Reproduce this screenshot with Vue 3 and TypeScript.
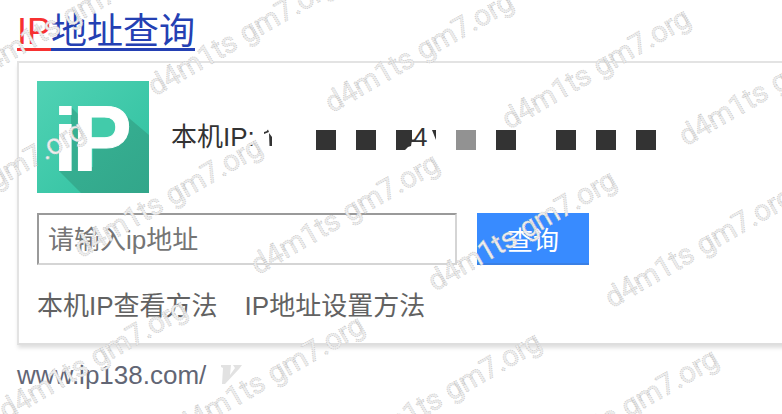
<script setup lang="ts">
interface Point { x: number; y: number }

const squares = [
  { x: 316, fill: '#333' }, { x: 356, fill: '#333' },
  { x: 456, fill: '#929292' }, { x: 496, fill: '#333' },
  { x: 556, fill: '#333' }, { x: 596, fill: '#333' }, { x: 636, fill: '#333' },
]

const rows: Point[] = [{ x: -22, y: 80 }, { x: -96, y: 242 }, { x: 6, y: 420.5 }]
const marks: Point[] = rows.flatMap((row) =>
  [0, 1, 2, 3, 4, 5].map((i) => ({ x: row.x + i * 177, y: row.y + i * 16.6 })),
)
</script>

<template>
  <main class="result">
    <h3 class="title"><a class="title-link"><em>IP</em>地址查询</a></h3>
    <section class="card">
      <div class="info">
        <svg class="logo" viewBox="0 0 112 112">
          <defs>
            <linearGradient id="tile" x1="0" y1="0" x2="1" y2="1">
              <stop offset="0" stop-color="#50d2b4" />
              <stop offset="1" stop-color="#2fc09f" />
            </linearGradient>
            <linearGradient id="shade" x1="0" y1="0" x2="1" y2="1">
              <stop offset="0.2" stop-color="#37b193" />
              <stop offset="1" stop-color="#32a68a" />
            </linearGradient>
          </defs>
          <rect width="112" height="112" fill="url(#tile)" />
          <path d="M34 26 L42 34 V90 H34 Z M56 60 L86 32 L112 54 V112 H44 L22 90 L56 86 Z" fill="url(#shade)" />
          <path d="M50 32 H72 Q84 34 84 46 Q84 60 72 60 H50 Z" fill="#42cbaa" />
          <g class="logo-letters">
            <text transform="translate(15.8 90) scale(1 .97)" font-size="91">i</text>
            <text transform="translate(35.6 89.6) scale(.955 .99)" font-size="93" class="logo-cap">P</text>
          </g>
        </svg>
        <span class="label">本机IP:</span>
        <svg class="redacted" viewBox="262 117 400 40">
          <path d="M264 132 Q267 131.5 268 129.5 L269 132 L264 134 Z M269 133 L272 137 V146 H269.5 Z" fill="#333" />
          <rect v-for="s in squares" :key="s.x" :x="s.x" y="130" width="20" height="20" :fill="s.fill" />
          <path d="M396 130 H412 V140 L411 146 L408 147 L405 150 H396 Z" fill="#333" />
          <rect x="410" y="139.5" width="5" height="2.5" fill="#333" />
          <text x="413" y="146" class="digit">4</text>
          <path d="M432 130 H436 V140 Z" fill="#333" />
        </svg>
      </div>
      <form class="search" @submit.prevent>
        <input class="field" type="text" placeholder="请输入ip地址" />
        <button class="submit" type="submit">查询</button>
      </form>
      <nav class="links"><a>本机IP查看方法</a><a>IP地址设置方法</a></nav>
    </section>
    <footer class="source">
      <span>www.ip138.com/</span>
      <svg class="badge" viewBox="0 0 22 20"><path d="M0 0 H10 L9 10 L14 3 L12 0 H21 L18 4 L4 19 H1 L2 3 L0 2 Z" fill="#e2e2e2" /></svg>
    </footer>
    <svg class="watermark" viewBox="0 0 782 414">
      <text v-for="(m, i) in marks" :key="i" :transform="`translate(${m.x} ${m.y}) rotate(-30)`" textLength="212">d4m1ts gm7.org</text>
    </svg>
  </main>
</template>

<style>
body { margin: 0; background: #fff; overflow: hidden; }
</style>

<style scoped>
.result {
  position: relative;
  box-sizing: border-box;
  width: 782px;
  height: 414px;
  padding: 8px 0 0 17px;
  overflow: hidden;
  font-family: "Liberation Sans", "Noto Sans CJK SC", sans-serif;
  font-size: 26px;
  color: #333;
}
.title { margin: 0; height: 53px; font-size: 36px; font-weight: 400; line-height: 48px; }
.title-link { color: #2440b3; text-decoration: none; display: inline-block; height: 40px; line-height: 48px; border-bottom: 3px solid #2440b3; }
.title-link em { display: inline-block; height: 40px; color: #f73131; font-style: normal; border-bottom: 3px solid #f73131; }
.card {
  box-sizing: border-box;
  width: 800px;
  height: 284px;
  padding: 18px;
  border: 2px solid #e3e3e3;
  border-bottom-color: #dedede;
  box-shadow: 0 4px 4px -1px rgba(0, 0, 0, .13);
}
.info { display: flex; align-items: center; height: 112px; }
.logo { width: 112px; height: 112px; flex: none; }
.logo-letters { fill: #fff; font-family: "Liberation Sans", sans-serif; font-weight: 700; }
.logo-cap { stroke: #fff; stroke-width: 1px; }
.label { width: 91px; margin-left: 22px; line-height: 40px; white-space: nowrap; }
.redacted { width: 400px; height: 40px; flex: none; }
.digit { fill: #333; font-size: 26px; }
.search { display: flex; gap: 20px; margin-top: 20px; }
.field {
  box-sizing: border-box;
  width: 420px;
  height: 52px;
  padding: 2px 9px 0;
  border: 2px solid;
  border-color: #9a9a9a #d5d5d5 #d5d5d5 #9a9a9a;
  border-radius: 0;
  outline: none;
  background: #fff;
  font: inherit;
}
.field::placeholder { color: #757575; opacity: 1; }
.submit {
  width: 112px;
  height: 52px;
  padding: 0;
  border: 0;
  border-bottom: 2px solid #3a80e5;
  background: #388bff;
  color: #fff;
  font: inherit;
}
.links { display: flex; gap: 27px; margin-top: 20px; line-height: 42px; color: #626262; }
.source { display: flex; align-items: center; gap: 15px; height: 60px; color: #626675; }
.badge { width: 22px; height: 20px; }
.watermark { position: absolute; left: 0; top: 0; width: 782px; height: 414px; pointer-events: none; }
.watermark text {
  font-family: Roboto, sans-serif;
  font-size: 29px;
  word-spacing: 1px;
  fill: #eee;
  stroke: #c6c6c6;
  stroke-width: .8px;
  stroke-dasharray: 1 1.2;
}
</style>
